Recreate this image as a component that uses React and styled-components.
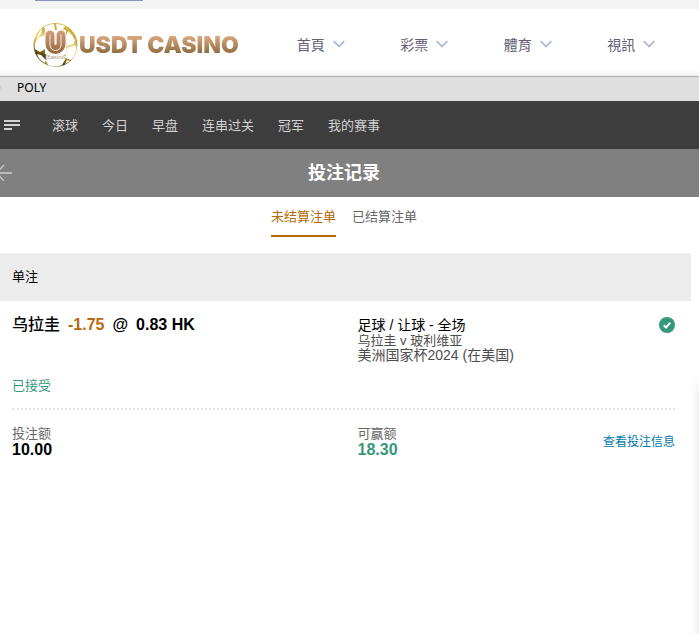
import React from 'react';
import styled, { createGlobalStyle } from 'styled-components';

const GlobalStyle = createGlobalStyle`
	* {
		box-sizing: border-box;
	}

	body {
		margin: 0;
		overflow: hidden;
		background: #fff;
		color: #000;
		font-family: 'Liberation Sans', 'Noto Sans CJK SC', sans-serif;
		font-size: 13px;
		line-height: 15px;
	}

	button {
		padding: 0;
		border: 0;
		background: none;
		font: inherit;
		cursor: pointer;
	}

	a {
		color: inherit;
		text-decoration: none;
	}

	p, h1, h2, h3, dl, dt, dd {
		margin: 0;
		font-size: inherit;
		font-weight: inherit;
	}

	svg {
		display: block;
		flex: none;
	}
`;

const Page = styled.div`
	position: relative;
	min-height: 100vh;
	overflow: hidden;
`;

const TopStrip = styled.div`
	height: 9px;
	padding-left: 35px;
	background: #f3f3f3;
`;

const TopButtonEdge = styled.div`
	width: 108px;
	height: 1px;
	background: #8a91b8;
`;

const Header = styled.header`
	display: flex;
	align-items: center;
	height: 68px;
	padding: 4px 16px 0 33px;
	border-bottom: 1px solid #adb0ad;
	background: linear-gradient(#fff 61px, #ececec 68px);
`;

const Brand = styled.a`
	display: flex;
	align-items: center;
	flex: none;
	width: 236px;
`;

const Wordmark = styled.span`
	background: linear-gradient(#d9a67d 20%, #8f6c42 80%);
	background-clip: text;
	color: transparent;
	font-family: Inter, 'Liberation Sans', sans-serif;
	font-size: 23px;
	font-weight: 900;
	line-height: 28px;
	white-space: nowrap;
`;

const MainNav = styled.nav`
	display: grid;
	grid-template-columns: repeat(4, 1fr);
	flex: 1;
`;

const MainNavItem = styled.button`
	display: flex;
	align-items: center;
	justify-content: center;
	gap: 8px;
	padding-bottom: 1px;
	color: #625d74;
	font-family: 'Noto Sans CJK TC', sans-serif;
	font-size: 14px;
	line-height: 18px;
`;

const SiteBar = styled.div`
	display: flex;
	align-items: center;
	gap: 16px;
	height: 24px;
	padding-bottom: 3px;
	background: #dfdfdf;
	font-family: 'Noto Sans', sans-serif;
	font-size: 12px;
`;

const Marker = styled.span`
	width: 1px;
	height: 3px;
	background: #e9b9ec;
`;

const SportsBar = styled.div`
	display: flex;
	align-items: center;
	height: 48px;
	padding-left: 4px;
	background: #3d3d3d;
	color: #d2d2d2;
`;

const SportsNav = styled.nav`
	display: flex;
	gap: 24px;
	margin-left: 32px;
`;

const TitleBar = styled.div`
	display: grid;
	grid-template-columns: 12px 1fr 23px;
	align-items: center;
	height: 48px;
	background: #808080;
	color: #fff;
`;

const Title = styled.h1`
	font-size: 18px;
	font-weight: bold;
	line-height: 24px;
	text-align: center;
`;

const Tabs = styled.div`
	display: flex;
	justify-content: center;
	gap: 16px;
	height: 56px;
	padding-right: 11px;
`;

const Tab = styled.button`
	height: 40px;
	border-bottom: 2px solid ${props => (props.$active ? '#b36b00' : 'transparent')};
	color: ${props => (props.$active ? '#b36b00' : '#666')};
`;

const Bets = styled.main`
	margin-right: 8px;
`;

const BetHeading = styled.h2`
	padding: 16px 12px;
	background: #ececec;
	line-height: 16px;
`;

const Row = styled.div`
	display: grid;
	grid-template-columns: 1fr 1fr;
	margin-right: 16px;
	margin-left: 12px;
`;

const Selection = styled(Row)`
	padding: 16px 0 15px;
	border-bottom: 2px dotted #e5e5e5;
`;

const Pick = styled.h3`
	display: flex;
	gap: 8px;
	font-size: 16px;
	font-weight: bold;
	line-height: 16px;
`;

const Team = styled.span`
	font-weight: 500;
`;

const Handicap = styled.span`
	color: #b8690a;
`;

const Status = styled.p`
	margin-top: 45px;
	color: #35987b;
	line-height: 15px;
`;

const EventCell = styled.div`
	display: flex;
	align-items: flex-start;
	justify-content: space-between;
	padding-left: 14px;
`;

const EventInfo = styled.div`
	padding-top: 1px;
	color: #4d4d4d;
	font-size: 14px;
	line-height: 15px;
`;

const Market = styled.p`
	color: #000;
`;

const Teams = styled.p`
	font-size: 13px;
`;

const Amounts = styled(Row)`
	padding-top: 16px;
`;

const Label = styled.dt`
	color: #666;
	line-height: 15px;
`;

const Value = styled.dd`
	color: ${props => (props.$win ? '#35987b' : '#000')};
	font-size: 16px;
	font-weight: bold;
	line-height: 18px;
`;

const Details = styled.a`
	align-self: center;
	color: #007aa6;
	font-size: 12px;
`;

// edge of the drawer that waits outside the window
const Drawer = styled.aside`
	position: absolute;
	top: 384px;
	right: -9px;
	bottom: -16px;
	width: 8px;
	box-shadow: 0 0 12px rgba(0, 0, 0, 0.15);
`;

const Chevron = () => (
	<svg width="12" height="8" viewBox="0 0 12 8" fill="none">
		<path d="M.7 1.2 6 6.5l5.3-5.3" stroke="#b0b9da" strokeWidth="1.8" />
	</svg>
);

const Ball = () => (
	<svg width="46" height="46" viewBox="0 0 46 46">
		<defs>
			<linearGradient id="gold" x1="0.7" y1="0" x2="0.3" y2="1">
				<stop offset="0" stopColor="#d9b53b" />
				<stop offset="0.25" stopColor="#c9a838" />
				<stop offset="0.48" stopColor="#f2dc8c" />
				<stop offset="0.64" stopColor="#b8932c" />
				<stop offset="0.82" stopColor="#4d3b08" />
				<stop offset="1" stopColor="#c9a94a" />
			</linearGradient>
			<linearGradient id="copper" gradientUnits="userSpaceOnUse" x1="0" y1="8" x2="0" y2="32">
				<stop offset="0" stopColor="#d3a07c" />
				<stop offset="1" stopColor="#94673f" />
			</linearGradient>
		</defs>
		<circle cx="22.5" cy="23" r="22" fill="url(#gold)" />
		<g fill="#fff">
			<path d="M11 5c3-2 7-3 10-3l1 6-9 3z" />
			<path d="M23 2c4 0 7 1 9 2l-2 4-6 0z" />
			<path d="M9 6l-1 6-4 4c1-4 3-8 5-10z" />
			<path d="M5 16l7-3v14l-5 3-5-3c-1-4 0-8 3-11z" />
			<path d="M35 9l4 4 3 5-1 4-7 2-1-10z" />
			<path d="M34 26l8-3 1 2c0 6-2 10-5 13l-6-2z" />
			<path d="M4 32l4 1 5 5-1 3c-4-2-7-5-8-9z" />
			<path d="M14 35h16l2 3-3 5c-5 2-10 2-14 0l-2-4z" />
			<path d="M34 38l3 1-5 3z" />
			<path d="M12 8h21v24l-10 5-11-5z" />
		</g>
		<g fill="none" strokeLinecap="round">
			<path d="M17 13v9a5.500 5.500 0 0 0 11 0v-9" stroke="#fff" strokeWidth="11" />
			<path d="M17 13v9a5.500 5.500 0 0 0 11 0v-9" stroke="url(#copper)" strokeWidth="9" />
			<path d="M17 13v10a5.500 5.500 0 0 0 11 0V13" stroke="#f7ece3" strokeWidth="1" />
			<path d="M22.500 12v10" stroke="#f7ece3" strokeWidth="1.500" />
		</g>
		<text
			x="22.5"
			y="37"
			textAnchor="middle"
			fill="#b59578"
			stroke="#fff"
			strokeWidth="1.5"
			paintOrder="stroke"
			fontFamily="Liberation Sans, sans-serif"
			fontSize="6"
		>
			Casino
		</text>
	</svg>
);

const MenuIcon = () => (
	<svg width="16" height="10" viewBox="0 0 16 10" fill="#d2d2d2">
		<path d="M0 0h16v2H0zM0 4h16v2H0zM0 8h8v2H0z" />
	</svg>
);

const BackIcon = () => (
	<svg width="12" height="16" viewBox="4 0 12 16" fill="none" stroke="#ccc">
		<path d="M0 8h16" strokeWidth="1.500" />
		<path d="M8 0 .5 8 8 16" strokeWidth="1.200" />
	</svg>
);

const CheckIcon = () => (
	<svg width="16" height="16" viewBox="0 0 16 16" role="img" aria-label="已接受">
		<circle cx="8" cy="8" r="8" fill="#35987b" />
		<path d="M4.800 8.300 7 10.500l4.300-4.800" fill="none" stroke="#fff" strokeWidth="2" />
	</svg>
);

const mainNav = ['首頁', '彩票', '體育', '視訊'];
const sportsNav = ['滚球', '今日', '早盘', '连串过关', '冠军', '我的赛事'];

const App = () => (
	<Page>
		<GlobalStyle />
		<TopStrip>
			<TopButtonEdge />
		</TopStrip>
		<Header>
			<Brand href="#">
				<Ball />
				<Wordmark>USDT CASINO</Wordmark>
			</Brand>
			<MainNav>
				{mainNav.map(name => (
					<MainNavItem key={name}>
						{name}
						<Chevron />
					</MainNavItem>
				))}
			</MainNav>
		</Header>
		<SiteBar>
			<Marker />
			POLY
		</SiteBar>
		<SportsBar>
			<button aria-label="菜单">
				<MenuIcon />
			</button>
			<SportsNav>
				{sportsNav.map(name => (
					<a href="#" key={name}>
						{name}
					</a>
				))}
			</SportsNav>
		</SportsBar>
		<TitleBar>
			<button aria-label="返回">
				<BackIcon />
			</button>
			<Title>投注记录</Title>
		</TitleBar>
		<Tabs role="tablist">
			<Tab role="tab" aria-selected="true" $active>
				未结算注单
			</Tab>
			<Tab role="tab" aria-selected="false">
				已结算注单
			</Tab>
		</Tabs>
		<Bets>
			<BetHeading>单注</BetHeading>
			<Selection>
				<div>
					<Pick>
						<Team>乌拉圭</Team>
						<Handicap>-1.75</Handicap>
						<span>@</span>
						<span>0.83 HK</span>
					</Pick>
					<Status>已接受</Status>
				</div>
				<EventCell>
					<EventInfo>
						<Market>足球 / 让球 - 全场</Market>
						<Teams>乌拉圭 v 玻利维亚</Teams>
						<p>美洲国家杯2024 (在美国)</p>
					</EventInfo>
					<CheckIcon />
				</EventCell>
			</Selection>
			<Amounts>
				<dl>
					<Label>投注额</Label>
					<Value>10.00</Value>
				</dl>
				<EventCell>
					<dl>
						<Label>可赢额</Label>
						<Value $win>18.30</Value>
					</dl>
					<Details href="#">查看投注信息</Details>
				</EventCell>
			</Amounts>
		</Bets>
		<Drawer />
	</Page>
);

export default App;
